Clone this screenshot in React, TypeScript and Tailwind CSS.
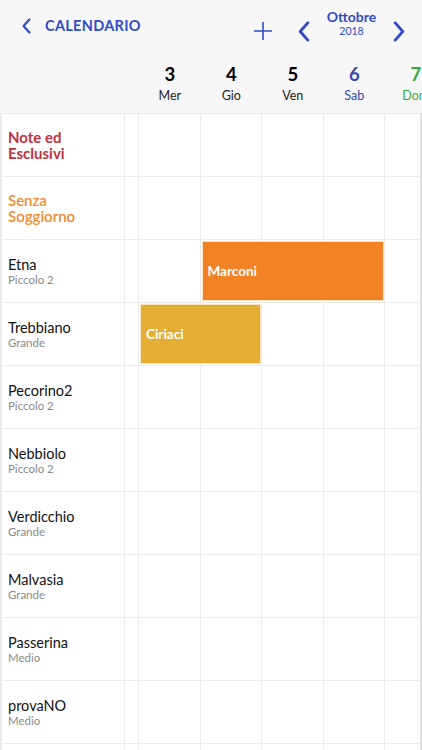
import React from "react"

const DAYS = [
  { n: "3", d: "Mer", color: "text-black", sub: "text-[#222]" },
  { n: "4", d: "Gio", color: "text-black", sub: "text-[#222]" },
  { n: "5", d: "Ven", color: "text-black", sub: "text-[#222]" },
  { n: "6", d: "Sab", color: "text-[#3949ab]", sub: "text-[#3949ab]" },
  { n: "7", d: "Dom", color: "text-[#3aa944]", sub: "text-[#3aa944]" },
]

type Room = { name: string; sub?: string; tone?: "red" | "orange" }

const ROOMS: Room[] = [
  { name: "Note ed Esclusivi", tone: "red" },
  { name: "Senza Soggiorno", tone: "orange" },
  { name: "Etna", sub: "Piccolo 2" },
  { name: "Trebbiano", sub: "Grande" },
  { name: "Pecorino2", sub: "Piccolo 2" },
  { name: "Nebbiolo", sub: "Piccolo 2" },
  { name: "Verdicchio", sub: "Grande" },
  { name: "Malvasia", sub: "Grande" },
  { name: "Passerina", sub: "Medio" },
  { name: "provaNO", sub: "Medio" },
  { name: "", sub: "" },
]

// bookings: row index -> event
const EVENTS: Record<number, { label: string; start: number; span: number; bg: string }> = {
  2: { label: "Marconi", start: 1, span: 3, bg: "bg-[#f28226]" },
  3: { label: "Ciriaci", start: 0, span: 2, bg: "bg-[#e3ae33]" },
}

const COL = 61.5

function Chevron({ dir, className }: { dir: "left" | "right"; className?: string }) {
  return (
    <svg viewBox="0 0 14 22" className={className} fill="none">
      <path
        d={dir === "left" ? "M11 2 L3 11 L11 20" : "M3 2 L11 11 L3 20"}
        stroke="currentColor"
        strokeWidth="3"
        strokeLinecap="round"
        strokeLinejoin="round"
      />
    </svg>
  )
}

export default function App() {
  return (
    <div
      className="w-[422px] h-[750px] overflow-hidden bg-white relative"
      style={{ fontFamily: "Lato, 'Noto Sans', sans-serif" }}
    >
      {/* top header */}
      <div className="bg-[#f7f7f8]">
        <div className="h-[52px] flex items-center relative">
          <div className="flex items-center text-[#2f4cc8] pl-[21px]">
            <Chevron dir="left" className="w-[11px] h-[16px]" />
            <span className="ml-[13px] text-[14.5px] font-bold tracking-[0.3px]">CALENDARIO</span>
          </div>
          <div className="ml-auto flex items-center text-[#2f4cc8] pt-[11px] pr-[16px]">
            <svg viewBox="0 0 20 20" className="w-[20px] h-[20px] -mt-[2px]" fill="none">
              <path d="M10 1 V19 M1 10 H19" stroke="currentColor" strokeWidth="1.6" />
            </svg>
            <Chevron dir="left" className="ml-[24px] w-[14px] h-[21px]" />
            <div className="w-[81px] flex flex-col items-center -mt-[16px]">
              <span className="text-[14px] font-bold leading-[16px]">Ottobre</span>
              <span className="text-[10.5px] leading-[13px]">2018</span>
            </div>
            <Chevron dir="right" className="w-[14px] h-[21px]" />
          </div>
        </div>
        <div className="h-[61px] flex">
          <div className="w-[139px] shrink-0" />
          {DAYS.map((d) => (
            <div key={d.n} className="w-[61.5px] shrink-0 flex flex-col items-center pt-[12px]">
              <span className={`text-[18.5px] font-bold leading-[21px] ${d.color}`}>{d.n}</span>
              <span className={`text-[12.5px] leading-[16px] mt-[3px] ${d.sub}`}>{d.d}</span>
            </div>
          ))}
        </div>
      </div>

      {/* grid body */}
      <div className="border-t border-[#ececec] border-r-2 border-r-[#e2e2e2] w-[422px]">
        {ROOMS.map((r, i) => {
          const ev = EVENTS[i]
          return (
            <div key={i} className="h-[63px] flex border-b border-[#ececec] relative">
              <div className="w-[125px] shrink-0 border-l-2 border-l-[#ececec] border-r border-[#ececec] flex flex-col justify-center pl-[6px]">
                {r.tone === "red" && (
                  <span className="text-[15px] font-bold leading-[16px] text-[#c1313c] w-[90px]">{r.name}</span>
                )}
                {r.tone === "orange" && (
                  <span className="text-[15px] font-semibold leading-[16px] text-[#f08a2e] w-[90px]">{r.name}</span>
                )}
                {!r.tone && (
                  <>
                    <span className="text-[14.5px] leading-[17px] text-[#111]">{r.name}</span>
                    <span className="text-[11.5px] leading-[14px] text-[#8a8a8a]">{r.sub}</span>
                  </>
                )}
              </div>
              <div className="w-[14px] shrink-0 border-r border-[#ececec]" />
              {DAYS.map((d) => (
                <div key={d.n} className="w-[61.5px] shrink-0 border-r border-[#ececec]" />
              ))}
              {ev && (
                <div
                  className={`absolute top-[1px] bottom-[1px] ${ev.bg} border border-[#fbe3c4] flex items-center pl-[5px]`}
                  style={{ left: 140 + ev.start * COL, width: ev.span * COL - 2 }}
                >
                  <span className="text-white font-bold text-[13.5px]">{ev.label}</span>
                </div>
              )}
            </div>
          )
        })}
      </div>
    </div>
  )
}
